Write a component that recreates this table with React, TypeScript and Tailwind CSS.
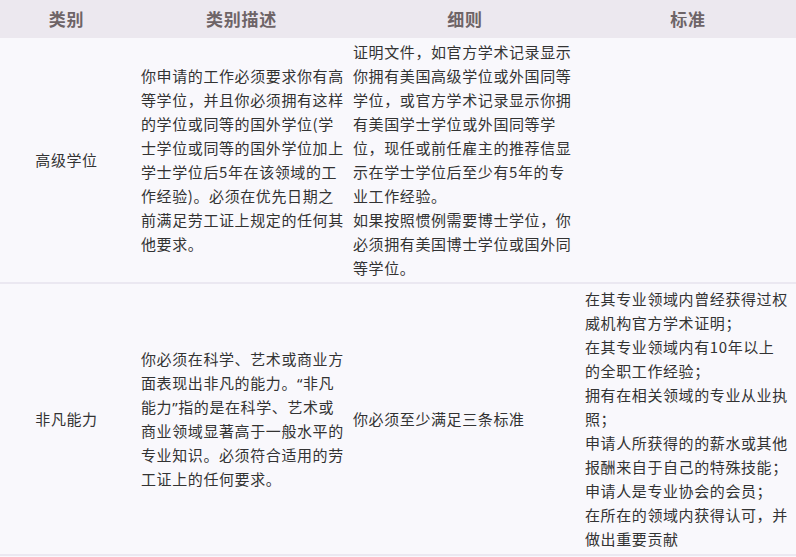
import React from 'react';

const Q = ({ children }: { children: React.ReactNode }) => (
  <span style={{ fontFamily: '"Noto Sans", sans-serif' }}>{children}</span>
);

const rows = [
  {
    category: '高级学位',
    desc: <>你申请的工作必须要求你有高等学位，并且你必须拥有这样的学位或同等的国外学位(学士学位或同等的国外学位加上学士学位后5年在该领域的工作经验)。必须在优先日期之前满足劳工证上规定的任何其他要求。</>,
    rules: [
      '证明文件，如官方学术记录显示你拥有美国高级学位或外国同等学位，或官方学术记录显示你拥有美国学士学位或外国同等学位，现任或前任雇主的推荐信显示在学士学位后至少有5年的专业工作经验。',
      '如果按照惯例需要博士学位，你必须拥有美国博士学位或国外同等学位。',
    ],
    standards: [] as string[],
  },
  {
    category: '非凡能力',
    desc: (
      <>
        你必须在科学、艺术或商业方面表现出非凡的能力。<Q>“</Q>非凡能力<Q>”</Q>指的是在科学、艺术或商业领域显著高于一般水平的专业知识。必须符合适用的劳工证上的任何要求。
      </>
    ),
    rules: ['你必须至少满足三条标准'],
    standards: [
      '在其专业领域内曾经获得过权威机构官方学术证明；',
      '在其专业领域内有10年以上的全职工作经验；',
      '拥有在相关领域的专业从业执照；',
      '申请人所获得的的薪水或其他报酬来自于自己的特殊技能；',
      '申请人是专业协会的会员；',
      '在所在的领域内获得认可，并做出重要贡献',
    ],
  },
];

export default function App() {
  return (
    <div
      className="w-[796px] h-[557px] overflow-hidden bg-[#f9f8fc]"
      style={{ fontFamily: '"Noto Sans CJK SC", "Noto Sans", sans-serif' }}
    >
      {/* Header */}
      <div className="grid grid-cols-[133px_217px_230px_216px] h-[38px] items-center bg-[#ece8ef] text-[17px] font-bold tracking-[0.8px] text-[#6e6467]">
        <div className="text-center">类别</div>
        <div className="text-center">类别描述</div>
        <div className="text-center">细则</div>
        <div className="text-center">标准</div>
      </div>

      {rows.map((row, i) => (
        <div
          key={i}
          className="grid grid-cols-[133px_217px_230px_216px] items-center border-b-2 border-[#ebe8f1] text-[15px] leading-[24px] tracking-[0.6px] text-[#333333]"
        >
          <div className="text-center py-[2px]">{row.category}</div>
          <div className="pl-[8px] pr-[4px] py-[2px]">{row.desc}</div>
          <div className="pl-[3px] pr-[4px] py-[2px]">
            {row.rules.map((r, j) => (
              <p key={j}>{r}</p>
            ))}
          </div>
          <div className="pl-[5px] pr-[7px] py-[3px]">
            {row.standards.map((s, j) => (
              <p key={j}>{s}</p>
            ))}
          </div>
        </div>
      ))}
    </div>
  );
}
